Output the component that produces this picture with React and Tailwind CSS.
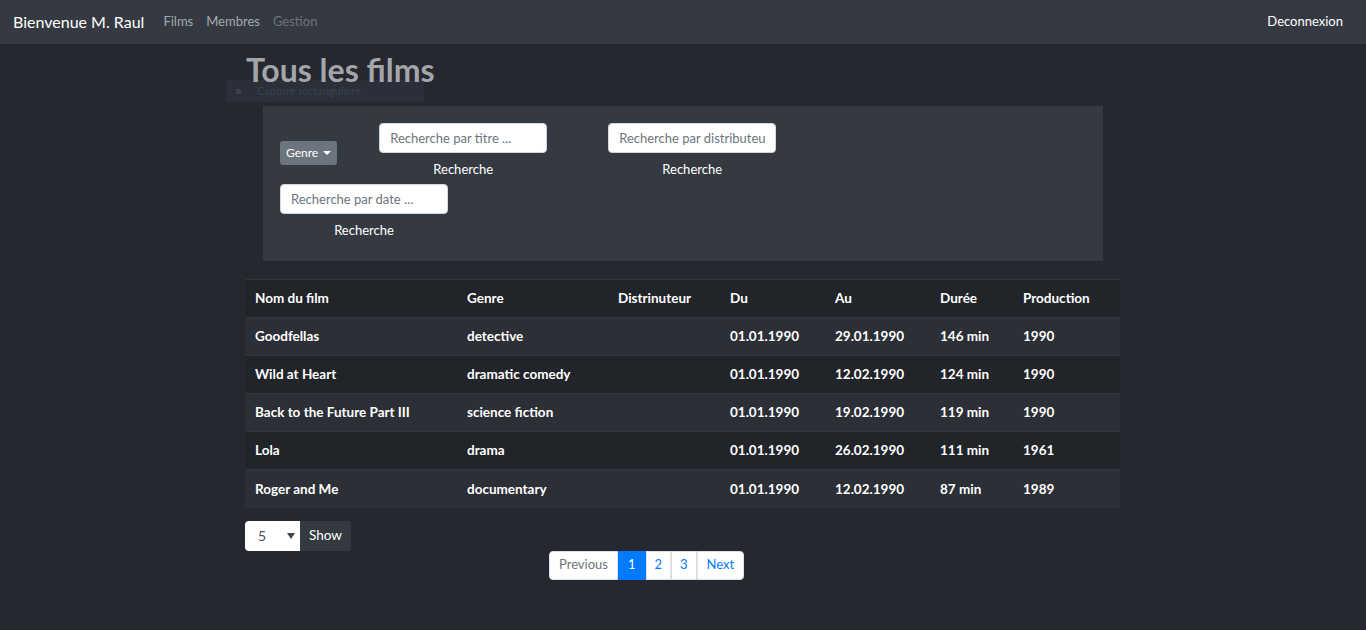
import React from "react";

const films = [
  { nom: "Goodfellas", genre: "detective", du: "01.01.1990", au: "29.01.1990", duree: "146 min", prod: "1990" },
  { nom: "Wild at Heart", genre: "dramatic comedy", du: "01.01.1990", au: "12.02.1990", duree: "124 min", prod: "1990" },
  { nom: "Back to the Future Part III", genre: "science fiction", du: "01.01.1990", au: "19.02.1990", duree: "119 min", prod: "1990" },
  { nom: "Lola", genre: "drama", du: "01.01.1990", au: "26.02.1990", duree: "111 min", prod: "1961" },
  { nom: "Roger and Me", genre: "documentary", du: "01.01.1990", au: "12.02.1990", duree: "87 min", prod: "1989" },
];

function SearchField({ placeholder }) {
  return (
    <div className="flex flex-col items-center w-[168px]">
      <input
        className="w-full h-[30px] rounded bg-white border border-gray-300 px-[10px] text-[13px] text-gray-700 placeholder:text-[#6c757d] outline-none"
        placeholder={placeholder}
      />
      <span className="mt-[10px] text-[13px] text-white leading-none">Recherche</span>
    </div>
  );
}

const App = () => {
  return (
    <div className="min-h-[630px] bg-[#252830] font-['Lato',sans-serif] relative">
      <nav className="h-[44px] bg-[#353a42] flex items-center px-[13px]">
        <span className="text-[16px] text-white mr-[19px]">Bienvenue M. Raul</span>
        <a className="text-[13px] text-[#a6a9ad] mr-[13px]">Films</a>
        <a className="text-[13px] text-[#a6a9ad] mr-[13px]">Membres</a>
        <a className="text-[13px] text-[#6e737a]">Gestion</a>
        <a className="ml-auto mr-[10px] text-[13px] text-white">Deconnexion</a>
      </nav>

      <div className="absolute left-[226px] top-[80px] w-[198px] h-[22px] bg-[#2b303b]/90 flex items-center pl-[10px] gap-[16px]">
        <span className="w-[5px] h-[5px] bg-[#3a4150]" />
        <span className="text-[11px] text-[#3c4250]">Capture rectangulaire</span>
      </div>

      <div className="w-[875px] ml-[245px] relative">
        <h1 className="text-[32px] font-bold text-[#a3a5a8] leading-none pt-[10px] pl-[1px] h-[62px]">Tous les films</h1>

        <div className="ml-[18px] w-[840px] h-[155px] bg-[#353a42] pt-[17px] px-[17px]">
          <div className="flex items-start">
            <button className="mt-[18px] h-[24px] px-[6px] rounded-[3px] bg-[#6c757d] text-white text-[12px] flex items-center gap-[5px]">
              Genre
              <span className="border-x-[4px] border-x-transparent border-t-[4px] border-t-white" />
            </button>
            <div className="ml-[42px]">
              <SearchField placeholder="Recherche par titre ..." />
            </div>
            <div className="ml-[61px]">
              <SearchField placeholder="Recherche par distributeur" />
            </div>
          </div>
          <div className="mt-[8px]">
            <SearchField placeholder="Recherche par date ..." />
          </div>
        </div>

        <table className="mt-[18px] w-[875px] text-[13.5px] font-bold text-white border-t border-[#32363c] table-fixed">
          <colgroup>
            <col className="w-[222px]" />
            <col className="w-[151px]" />
            <col className="w-[112px]" />
            <col className="w-[105px]" />
            <col className="w-[105px]" />
            <col className="w-[83px]" />
            <col className="w-[97px]" />
          </colgroup>
          <thead>
            <tr className="h-[38px] bg-[#212429] text-left">
              <th className="pl-[10px]">Nom du film</th>
              <th>Genre</th>
              <th>Distrinuteur</th>
              <th>Du</th>
              <th>Au</th>
              <th>Durée</th>
              <th>Production</th>
            </tr>
          </thead>
          <tbody>
            {films.map((f, i) => (
              <tr key={f.nom} className={"h-[38px] border-t border-[#34383e] " + (i % 2 === 0 ? "bg-[#2c2f35]" : "bg-[#212429]")}>
                <td className="pl-[10px]">{f.nom}</td>
                <td>{f.genre}</td>
                <td></td>
                <td>{f.du}</td>
                <td>{f.au}</td>
                <td>{f.duree}</td>
                <td>{f.prod}</td>
              </tr>
            ))}
          </tbody>
        </table>

        <div className="mt-[13px] flex items-center">
          <div className="w-[55px] h-[30px] bg-white rounded-l flex items-center justify-between pl-[13px] pr-[5px] text-[14px] text-[#495057]">
            5
            <span className="border-x-[4px] border-x-transparent border-t-[6px] border-t-[#444]" />
          </div>
          <button className="h-[30px] px-[9px] bg-[#343a40] rounded-r text-white text-[13.5px]">Show</button>
        </div>

        <div className="ml-[304px] flex h-[29px] text-[13px]">
          <span className="flex items-center px-[9px] bg-white border border-[#dee2e6] rounded-l text-[#6c757d]">Previous</span>
          <span className="flex items-center px-[9px] bg-[#007bff] border border-[#007bff] text-white">1</span>
          <span className="flex items-center px-[8px] bg-white border border-[#dee2e6] text-[#007bff]">2</span>
          <span className="flex items-center px-[8px] bg-white border border-[#dee2e6] text-[#007bff]">3</span>
          <span className="flex items-center px-[9px] bg-white border border-[#dee2e6] rounded-r text-[#007bff]">Next</span>
        </div>
      </div>
    </div>
  );
};

export default App;
